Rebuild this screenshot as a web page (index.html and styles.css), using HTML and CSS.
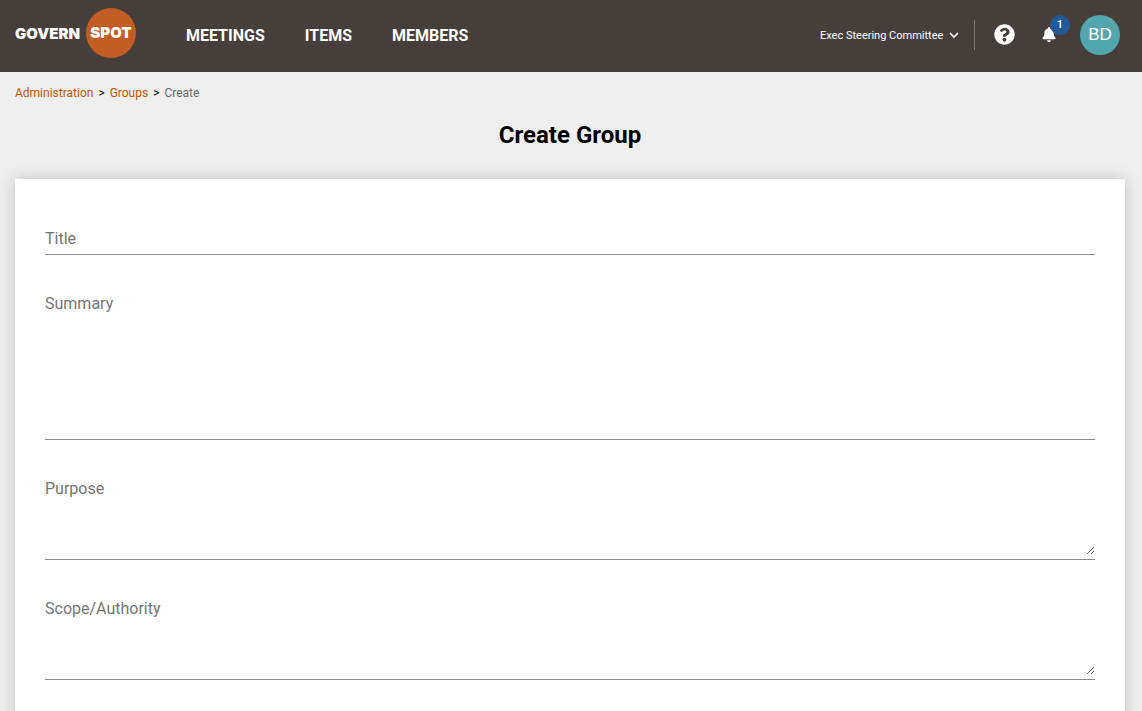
FILE: index.html
```html
<!DOCTYPE html>
<html lang="en">

<head>
    <meta charset="UTF-8">
    <meta name="viewport" content="width=device-width, initial-scale=1.0">
    <title>Create Group</title>
    <link rel="stylesheet" href="styles.css">
</head>

<body>

    <header class="topbar">
        <a class="logo" href="#">
            <span class="logo-govern">GOVERN</span>
            <span class="logo-spot">SPOT</span>
        </a>

        <nav class="main-nav">
            <a href="#">MEETINGS</a>
            <a href="#">ITEMS</a>
            <a href="#">MEMBERS</a>
        </nav>

        <div class="tools">
            <div class="group-picker">
                <select class="group-select" aria-label="Current group">
                    <option>Exec Steering Committee</option>
                </select>
                <svg class="chevron" viewBox="0 0 10 6" aria-hidden="true">
                    <path d="M1 1l4 4 4-4" fill="none" stroke="#fff" stroke-width="1.7" />
                </svg>
            </div>

            <button class="icon-btn help" type="button" aria-label="Help">
                <svg viewBox="0 0 512 512" aria-hidden="true">
                    <path fill="#fff" d="M504 256c0 137-111 248-248 248S8 393 8 256C8 119.100 119 8 256 8s248 111.100 248 248zM262.700 90c-54.500 0-89.300 23-116.500 63.800-3.500 5.300-2.400 12.400 2.700 16.300l34.700 26.300c5.200 3.900 12.600 3 16.700-2.100 17.900-22.700 30.100-35.800 57.300-35.800 20.400 0 45.700 13.100 45.700 33 0 15-12.400 22.700-32.500 34C247.100 238.500 216 254.900 216 296v4c0 6.600 5.400 12 12 12h56c6.600 0 12-5.400 12-12v-1.300c0-28.500 83.200-29.600 83.200-106.700 0-58-60.200-102-116.500-102zM256 338c-25.400 0-46 20.600-46 46s20.600 46 46 46 46-20.600 46-46-20.600-46-46-46z" />
                </svg>
            </button>

            <button class="icon-btn alerts" type="button" aria-label="Notifications">
                <svg viewBox="0 0 448 512" aria-hidden="true">
                    <path fill="#fff" d="M224 512c35.300 0 63.900-28.700 63.900-64H160.100c0 35.300 28.600 64 63.900 64zm215.400-149.700c-19.300-20.800-55.500-52-55.500-154.300 0-77.700-54.500-139.900-127.900-155.200V32c0-17.700-14.300-32-32-32s-32 14.300-32 32v20.800C118.600 68.100 64.100 130.300 64.100 208c0 102.300-36.200 133.500-55.500 154.300-6 6.400-8.700 14.100-8.600 21.700.1 16.400 13 32 32.100 32h383.800c19.100 0 32-15.600 32.100-32 .1-7.600-2.600-15.300-8.600-21.700z" />
                </svg>
                <span class="badge">1</span>
            </button>

            <button class="avatar" type="button">BD</button>
        </div>
    </header>

    <main class="page">

        <nav class="breadcrumb" aria-label="Breadcrumb">
            <a href="#">Administration</a>
            <span class="sep">&gt;</span>
            <a href="#">Groups</a>
            <span class="sep">&gt;</span>
            <span>Create</span>
        </nav>

        <h1>Create Group</h1>

        <form class="card">
            <div class="field">
                <input type="text" name="title" placeholder="Title" aria-label="Title">
            </div>
            <div class="field">
                <textarea class="summary" name="summary" placeholder="Summary" aria-label="Summary"></textarea>
            </div>
            <div class="field">
                <textarea class="notes" name="purpose" placeholder="Purpose" aria-label="Purpose"></textarea>
            </div>
            <div class="field">
                <textarea class="notes" name="scope" placeholder="Scope/Authority" aria-label="Scope/Authority"></textarea>
            </div>
        </form>

    </main>

</body>

</html>
```
FILE: styles.css
```css
* {
    box-sizing: border-box;
}

body {
    margin: 0;
    background-color: #efefef;
    color: #000;
    font-family: Roboto, Arial, sans-serif;
    font-size: 16px;
}

a {
    text-decoration: none;
}

button {
    padding: 0;
    border: none;
    background: none;
    cursor: pointer;
}

/* Top bar */
.topbar {
    display: flex;
    align-items: center;
    height: 72px;
    padding: 0 22px 2px 15px;
    background-color: #463e3b;
}

.logo {
    display: flex;
    align-items: center;
    gap: 6px;
    padding-bottom: 4px;
    color: #fff;
    font-family: Inter, sans-serif;
    font-size: 15px;
    font-weight: 900;
}

.logo-spot {
    display: flex;
    align-items: center;
    justify-content: center;
    width: 50px;
    height: 50px;
    padding-bottom: 2px;
    border-radius: 50%;
    background-color: #c45d23;
}

.main-nav {
    display: flex;
    gap: 40px;
    margin-left: 50px;
}

.main-nav a {
    color: #fff;
    font-weight: 700;
}

.tools {
    display: flex;
    align-items: center;
    margin-left: auto;
}

.group-picker {
    display: flex;
    align-items: center;
    gap: 5px;
    height: 30px;
    padding-right: 15px;
    border-right: 1px solid #7d7775;
}

.group-select {
    appearance: none;
    padding: 0;
    border: none;
    background: none;
    color: #fff;
    font-family: inherit;
    font-size: 11px;
    cursor: pointer;
}

.chevron {
    width: 10px;
    height: 6px;
}

.icon-btn {
    padding-bottom: 2px;
}

.icon-btn svg {
    display: block;
}

.help {
    margin-left: 19px;
}

.help svg {
    width: 21px;
    height: 21px;
}

.alerts {
    position: relative;
    margin: 0 24px 0 27px;
}

.alerts svg {
    width: 14px;
    height: 15px;
}

.badge {
    position: absolute;
    top: -12px;
    left: 8px;
    width: 20px;
    border-radius: 50%;
    background-color: #225895;
    color: #fff;
    font-family: Roboto, Arial, sans-serif;
    font-size: 11px;
    font-weight: 500;
    line-height: 20px;
}

.avatar {
    width: 40px;
    height: 40px;
    border-radius: 50%;
    background-color: #53a6ad;
    color: #fff;
    font-family: "Liberation Sans", Arial, sans-serif;
    font-size: 17px;
}

/* Page content */
.page {
    padding: 14px 17px 0 15px;
}

.breadcrumb {
    display: flex;
    gap: 5px;
    color: #666;
    font-size: 12px;
    line-height: 14px;
}

.breadcrumb a {
    color: #c15600;
}

.breadcrumb .sep {
    color: #000;
}

h1 {
    margin: 20px 0 29px;
    font-size: 24px;
    font-weight: 700;
    line-height: 30px;
    text-align: center;
}

.card {
    display: flex;
    flex-direction: column;
    gap: 35px;
    padding: 46px 30px;
    background-color: #fff;
    box-shadow: 0 0 15px rgba(0, 0, 0, 0.2);
}

/* Underlined form fields */
.field {
    padding-bottom: 4px;
    border-bottom: 1px solid #8e8e8e;
}

.field input,
.field textarea {
    display: block;
    width: 100%;
    height: 25px;
    padding: 4px 0 2px;
    border: none;
    outline: none;
    background: none;
    color: #000;
    font-family: inherit;
    font-size: 16px;
    line-height: 19px;
}

.field ::placeholder {
    color: #757575;
}

.field .summary {
    height: 145px;
    resize: none;
}

.field .notes {
    height: 80px;
    resize: vertical;
}
```
